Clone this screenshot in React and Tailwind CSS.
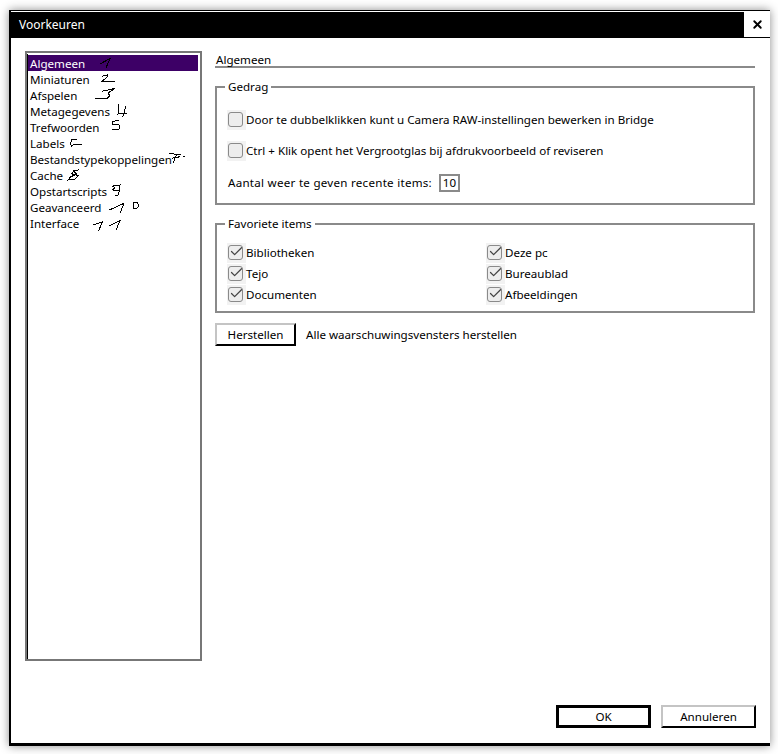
import { Check, X } from 'lucide-react';

const menuItems = [
  'Algemeen',
  'Miniaturen',
  'Afspelen',
  'Metagegevens',
  'Trefwoorden',
  'Labels',
  'Bestandstypekoppelingen',
  'Cache',
  'Opstartscripts',
  'Geavanceerd',
  'Interface',
];

// handwritten numbers that were scribbled over the list, in page coordinates
const scribbles = [
  '100,65 110,59.5 106,69',
  '101.7,77.3 107.3,76 107,78 101.7,82.7 115,82.3',
  '102,92.3 115,89.3 108,94 110,96.7 107,99.3 94.5,99',
  '119,105 118,115 127,114',
  '126,107 122.7,118',
  '119.3,121 112,122.7 112,125 119,126 119,130 112,130.5',
  '77,140 72,140.5 70,145 71.7,147 74,145 81.7,145.7',
  '169,154.3 181,156',
  '176.7,155 173,164.3',
  '172,159.3 180,157.7',
  '183,157 185,157.5',
  '79.3,170.7 73.3,172.3 71.7,175 78.3,176.7 75,180 68.3,181 70,178.3 76.7,175 73.3,171.7',
  '111.7,187.3 120,186 119.3,191.7 112.7,191 115,188.3',
  '119.3,191.7 118.3,196 115,196.7',
  '109.3,211 124,204.3 120,214.3',
  '133,204 137,203.5 139,207 136,210 133,209 133,204',
  '93.3,226 102.7,222.7 98.3,232.3',
  '109.3,226.7 120,221.7 116,231',
];

const CheckItem = ({ label, checked }) => (
  <label className="flex h-[21px] items-center">
    <span className="flex h-[20px] w-[19px] shrink-0 items-center bg-[#f2f2f2] pl-[1px]">
      <span className="relative h-[15px] w-[15px] rounded-[3px] border border-[#8a8a8a] bg-[#ededed]">
        {checked && <Check size={15} strokeWidth={2} className="absolute left-[0px] top-[-2px] text-[#444]" />}
      </span>
    </span>
    <span>{label}</span>
  </label>
);

const App = () => {
  return (
    <div className="h-[754px] w-[778px] overflow-hidden bg-white pl-[9px] pt-[10px] font-['Noto_Sans',sans-serif] text-[11.6px] text-black">
      <div className="flex h-[736px] w-[761px] flex-col border-b-[3px] border-l-2 border-t border-black bg-white shadow-[0_0_9px_rgba(0,0,0,0.45)]">
        {/* Title bar */}
        <div className="mt-[1px] flex h-[26px] items-center justify-between border-b border-black bg-black pl-[8px] text-white">
          <span className="text-[12px]">Voorkeuren</span>
          <button className="flex h-[25px] w-[26px] items-center justify-center bg-white text-black">
            <X size={13} strokeWidth={3.5} />
          </button>
        </div>

        <div className="flex flex-1 pl-[14px] pt-[13px]">
          {/* Left list */}
          <div className="relative h-[610px] w-[177px] shrink-0 border-2 border-[#777] pl-[0px] pt-[1px] pr-[2px]">
            <div className="h-full border-l border-black pt-[1px]">
              {menuItems.map((item, index) => (
                <div
                  key={item}
                  className={`h-[16px] pl-[2px] leading-[17px] ${index === 0 ? 'bg-[#3d0066] text-white' : ''}`}
                >
                  {item}
                </div>
              ))}
            </div>
            <svg
              className="pointer-events-none absolute left-[-2px] top-[-2px] h-[240px] w-[177px]"
              viewBox="25 52 177 240"
              fill="none"
              stroke="#000"
              strokeWidth="1"
              shapeRendering="crispEdges"
            >
              {scribbles.map((points) => (
                <polyline key={points} points={points} />
              ))}
            </svg>
          </div>

          {/* Right panel */}
          <div className="ml-[13px] w-[540px]">
            <div className="h-[17px] border-b-2 border-[#8a8a8a] pl-[1px] leading-[17px]">Algemeen</div>

            <fieldset className="mt-[12px] h-[125px] border-2 border-[#8a8a8a] pl-[10px]">
              <legend className="ml-[-2px] px-[3px] leading-[14px]">Gedrag</legend>
              <div className="mt-[15px]">
                <CheckItem label="Door te dubbelklikken kunt u Camera RAW-instellingen bewerken in Bridge" />
              </div>
              <div className="mt-[10px]">
                <CheckItem label="Ctrl + Klik opent het Vergrootglas bij afdrukvoorbeeld of reviseren" />
              </div>
              <div className="ml-[1px] mt-[13px] flex items-center">
                <span className="w-[211px] tracking-[0.26px]">Aantal weer te geven recente items:</span>
                <span className="flex h-[18px] w-[21px] items-center justify-center border-2 border-[#8a8a8a]">10</span>
              </div>
            </fieldset>

            <fieldset className="mt-[12px] h-[96px] border-2 border-[#8a8a8a] pl-[10px]">
              <legend className="ml-[-2px] px-[3px] leading-[14px]">Favoriete items</legend>
              <div className="mt-[11px] grid grid-cols-[259px_1fr]">
                <CheckItem checked label="Bibliotheken" />
                <CheckItem checked label="Deze pc" />
                <CheckItem checked label="Tejo" />
                <CheckItem checked label="Bureaublad" />
                <CheckItem checked label="Documenten" />
                <CheckItem checked label="Afbeeldingen" />
              </div>
            </fieldset>

            <div className="mt-[10px] flex items-center">
              <button className="h-[23px] w-[81px] border-2 border-b-black border-l-[#c4c4c4] border-r-black border-t-[#c4c4c4] leading-[16px]">
                Herstellen
              </button>
              <span className="ml-[10px]">Alle waarschuwingsvensters herstellen</span>
            </div>
          </div>
        </div>

        {/* Footer buttons */}
        <div className="flex justify-end gap-[10px] pb-[15px] pr-[14px]">
          <button className="h-[23px] w-[95px] border-[3px] border-black leading-[14px]">OK</button>
          <button className="h-[23px] w-[95px] border-2 border-b-black border-l-[#c4c4c4] border-r-black border-t-[#c4c4c4] leading-[16px]">
            Annuleren
          </button>
        </div>
      </div>
    </div>
  );
};

export default App;
